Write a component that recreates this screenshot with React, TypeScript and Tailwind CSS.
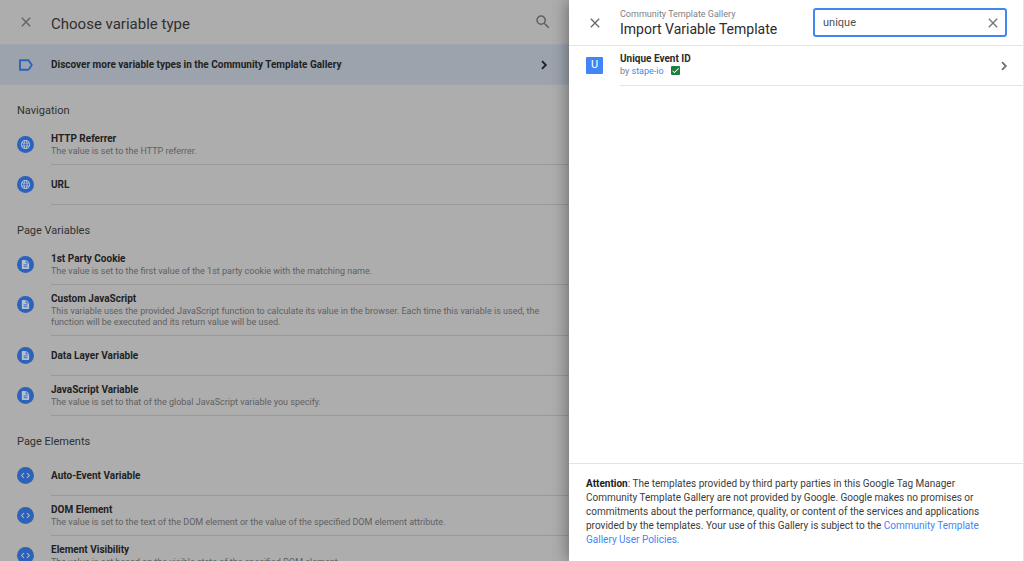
import { useState } from 'react';
import { MdCheck, MdClose, MdCode, MdLanguage, MdSearch } from 'react-icons/md';

interface VariableType {
  name: string;
  description?: string;
}

interface IconProps {
  size?: number;
  className?: string;
}

interface Section {
  title: string;
  icon: React.ComponentType<IconProps>;
  items: VariableType[];
}

function TagIcon({ className }: IconProps) {
  return (
    <svg viewBox="0 0 17 17" fill="none" stroke="currentColor" strokeWidth="1.9" strokeLinejoin="round" className={className}>
      <path d="M3 4.3h7.8c.6 0 1 .2 1.3.7L14.8 9l-2.7 4c-.3.5-.7.7-1.3.7H3Z" />
    </svg>
  );
}

function ChevronIcon({ className }: IconProps) {
  return (
    <svg viewBox="0 0 16 16" fill="none" stroke="currentColor" strokeWidth="1.9" className={className}>
      <path d="M6 4.2 9.8 8 6 11.8" />
    </svg>
  );
}

function DocIcon({ size = 12 }: IconProps) {
  return (
    <svg viewBox="0 0 12 12" width={size} height={size}>
      <path fill="currentColor" d="M3 1h4l3 3v6.2a.8.8 0 0 1-.8.8H2.8a.8.8 0 0 1-.8-.8V1.8A.8.8 0 0 1 2.8 1Z" />
      <path fill="none" stroke="#2d62ba" strokeWidth="0.9" d="M6.7 1.5v2.8h2.8M4 6.4h4M4 8.4h4" />
    </svg>
  );
}

const sections: Section[] = [
  {
    title: 'Navigation',
    icon: MdLanguage,
    items: [
      { name: 'HTTP Referrer', description: 'The value is set to the HTTP referrer.' },
      { name: 'URL' },
    ],
  },
  {
    title: 'Page Variables',
    icon: DocIcon,
    items: [
      {
        name: '1st Party Cookie',
        description: 'The value is set to the first value of the 1st party cookie with the matching name.',
      },
      {
        name: 'Custom JavaScript',
        description:
          'This variable uses the provided JavaScript function to calculate its value in the browser. Each time this variable is used, the function will be executed and its return value will be used.',
      },
      { name: 'Data Layer Variable' },
      {
        name: 'JavaScript Variable',
        description: 'The value is set to that of the global JavaScript variable you specify.',
      },
    ],
  },
  {
    title: 'Page Elements',
    icon: MdCode,
    items: [
      { name: 'Auto-Event Variable' },
      {
        name: 'DOM Element',
        description: 'The value is set to the text of the DOM element or the value of the specified DOM element attribute.',
      },
      {
        name: 'Element Visibility',
        description: 'The value is set based on the visible state of the specified DOM element.',
      },
    ],
  },
];

function VariableRow({ item, icon: Icon }: { item: VariableType; icon: Section['icon'] }) {
  return (
    <li>
      <button type="button" className="flex w-full items-stretch pl-[17px] text-left">
        <span className="mt-[11px] flex h-[17px] w-[17px] shrink-0 items-center justify-center rounded-full bg-[#2d62ba] text-[#b4bfd2]">
          <Icon size={11} />
        </span>
        <span className="ml-[17px] flex min-h-10 flex-1 flex-col justify-center border-b border-[#999999] py-[7px] pr-6">
          <span className="text-[10px] leading-[14px] font-bold text-[#222222]">{item.name}</span>
          {item.description && (
            <span className="text-[9px] leading-[11px] text-[#606060]">{item.description}</span>
          )}
        </span>
      </button>
    </li>
  );
}

export default function App() {
  const [query, setQuery] = useState('unique');

  return (
    <div className="flex h-screen overflow-hidden bg-[#adadad] font-['Roboto',sans-serif]">
      {/* Variable types */}
      <main className="min-w-0 flex-1 overflow-hidden">
        <header className="flex h-11 items-center px-[17px]">
          <button type="button" aria-label="Close" className="flex w-[17px] justify-center text-[#626262]">
            <MdClose size={16} />
          </button>
          <h1 className="ml-[17px] flex-1 pt-1 text-[15px] leading-5 text-[#303030]">Choose variable type</h1>
          <button type="button" aria-label="Search" className="text-[#606060]">
            <MdSearch size={18} />
          </button>
        </header>

        <button
          type="button"
          className="flex h-[41px] w-full items-center border-y border-[#a0a5b2] bg-[#9ca3ad] px-[17px] text-left"
        >
          <TagIcon className="h-[17px] w-[17px] text-[#2d62ba]" />
          <span className="ml-[17px] flex-1 text-[10px] leading-[14px] font-bold text-[#222222]">
            Discover more variable types in the Community Template Gallery
          </span>
          <ChevronIcon className="h-4 w-4 text-[#222222]" />
        </button>

        {sections.map((section) => (
          <section key={section.title}>
            <h2 className="flex h-10 items-center px-[17px] pt-3 text-[11px] text-[#303030]">{section.title}</h2>
            <ul>
              {section.items.map((item) => (
                <VariableRow key={item.name} item={item} icon={section.icon} />
              ))}
            </ul>
          </section>
        ))}
      </main>

      {/* Template gallery panel */}
      <aside className="relative flex w-[455px] shrink-0 flex-col border-r border-[#e4e4e8] bg-white shadow-[0_0_16px_rgba(0,0,0,0.45)]">
        <header className="flex h-[46px] items-center border-b border-[#e4e4e4] pr-4 pl-[17px]">
          <button type="button" aria-label="Close" className="flex w-[17px] justify-center text-[#6a6a6a]">
            <MdClose size={16} />
          </button>
          <div className="ml-[17px] flex-1">
            <p className="text-[9px] leading-3 text-[#808080]">Community Template Gallery</p>
            <h2 className="text-[14px] leading-[18px] text-[#2c2c2c]">Import Variable Template</h2>
          </div>
          <label className="flex h-[29px] w-[194px] items-center rounded-[3px] border-2 border-[#4285f4] pr-1 pl-2">
            <input
              type="text"
              aria-label="Search templates"
              value={query}
              onChange={(e) => setQuery(e.target.value)}
              className="min-w-0 flex-1 pt-0.5 text-[11px] text-[#505050] outline-none"
            />
            <button type="button" aria-label="Clear search" onClick={() => setQuery('')} className="text-[#757575]">
              <MdClose size={16} />
            </button>
          </label>
        </header>

        <div className="flex pl-[17px]">
          <span className="mt-[11px] flex h-[17px] w-[17px] shrink-0 items-center justify-center rounded-[1px] bg-[#4285f4] text-[11px] text-white">
            U
          </span>
          <div className="ml-[17px] flex h-10 flex-1 items-center border-b border-[#e4e4e4] pr-[11px]">
            <div className="flex-1 pb-0.5">
              <h3 className="text-[10px] leading-3 font-bold text-[#2c2c2c]">Unique Event ID</h3>
              <p className="flex items-center text-[9px] leading-3 text-[#808080]">
                by&nbsp;
                <a href="#stape-io" className="text-[#4285f4]">stape-io</a>
                <span className="ml-[7px] flex h-[9px] w-[9px] items-center justify-center rounded-[1px] bg-[#188038] text-white">
                  <MdCheck size={9} />
                </span>
              </p>
            </div>
            <button type="button" aria-label="Open Unique Event ID" className="text-[#757575]">
              <ChevronIcon className="h-4 w-4" />
            </button>
          </div>
        </div>

        <footer className="mt-auto border-t border-[#e4e4e4] px-[17px] pt-[13px] pb-[14px]">
          <p className="max-w-[410px] text-[10px] leading-[14px] text-[#3c3c3c]">
            <strong className="font-bold text-[#202020]">Attention</strong>: The templates provided by third party
            parties in this Google Tag Manager Community Template Gallery are not provided by Google. Google makes no
            promises or commitments about the performance, quality, or content of the services and applications
            provided by the templates. Your use of this Gallery is subject to the{' '}
            <a href="#policies" className="text-[#4285f4]">Community Template Gallery User Policies.</a>
          </p>
        </footer>
      </aside>
    </div>
  );
}
